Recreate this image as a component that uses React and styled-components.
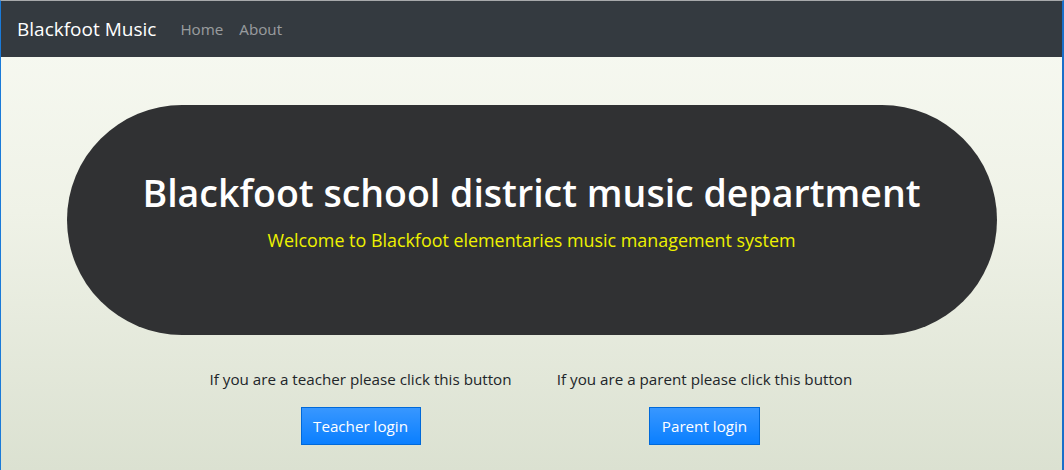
import React from 'react';
import styled, { createGlobalStyle } from 'styled-components';

const GlobalStyle = createGlobalStyle`
	html, body {
		margin: 0;
		padding: 0;
	}
	body {
		font-family: 'Open Sans', 'Liberation Sans', sans-serif;
		color: #212529;
		background: #eef1e6;
	}
	* {
		box-sizing: border-box;
	}
`;

const Frame = styled.div`
	min-height: 470px;
	height: 100vh;
	border-top: 1px solid #a7a9ab;
	border-left: 1px solid #1a7ad8;
	border-right: 2px solid #1a6fc9;
	background: linear-gradient(180deg, #f8faf3 0%, #eff2e7 45%, #dbe1d1 100%);
	display: flex;
	flex-direction: column;
`;

const Navbar = styled.nav`
	height: 56px;
	padding: 0 16px;
	display: flex;
	align-items: center;
	background: #343a40;
`;

const Brand = styled.a`
	color: #fff;
	font-size: 19px;
	margin-right: 16px;
	text-decoration: none;
	cursor: pointer;
`;

const NavLink = styled.a`
	color: rgba(255, 255, 255, 0.5);
	font-size: 15.2px;
	padding: 0 8px;
	text-decoration: none;
	cursor: pointer;
`;

const Container = styled.main`
	width: 930px;
	margin: 48px auto 0;
`;

const Jumbotron = styled.section`
	background: #303133;
	border-radius: 115px;
	padding: 64px 32px;
	text-align: center;
`;

const Title = styled.h1`
	margin: 0 0 8px;
	color: #fff;
	font-size: 37.5px;
	font-weight: 600;
	line-height: 48px;
`;

const Lead = styled.p`
	margin: 0 0 16px;
	color: #eef200;
	font-size: 17.9px;
	font-weight: 400;
	line-height: 30px;
`;

const Actions = styled.div`
	margin-top: 32px;
	display: flex;
	justify-content: center;
	gap: 2px;
	padding-left: 2px;
`;

const Column = styled.div`
	width: 342px;
	text-align: center;
`;

const Prompt = styled.p`
	margin: 0 0 16px;
	font-size: 15.2px;
	line-height: 24px;
`;

const LoginButton = styled.button`
	height: 38px;
	padding: 0;
	width: ${(p) => p.$width}px;
	white-space: nowrap;
	border: 1px solid #0069d9;
	border-radius: 0;
	background: linear-gradient(180deg, #3897ff 0%, #0a7fff 100%);
	color: #fff;
	font-family: inherit;
	font-size: 15.2px;
	cursor: pointer;
`;

const App = () => {
	return (
		<>
			<GlobalStyle />
			<Frame>
				<Navbar>
					<Brand>Blackfoot Music</Brand>
					<NavLink>Home</NavLink>
					<NavLink>About</NavLink>
				</Navbar>
				<Container>
					<Jumbotron>
						<Title>Blackfoot school district music department</Title>
						<Lead>Welcome to Blackfoot elementaries music management system</Lead>
					</Jumbotron>
				</Container>
				<Actions>
					<Column>
						<Prompt>If you are a teacher please click this button</Prompt>
						<LoginButton $width={120}>Teacher login</LoginButton>
					</Column>
					<Column>
						<Prompt>If you are a parent please click this button</Prompt>
						<LoginButton $width={111}>Parent login</LoginButton>
					</Column>
				</Actions>
			</Frame>
		</>
	);
};

export default App;
